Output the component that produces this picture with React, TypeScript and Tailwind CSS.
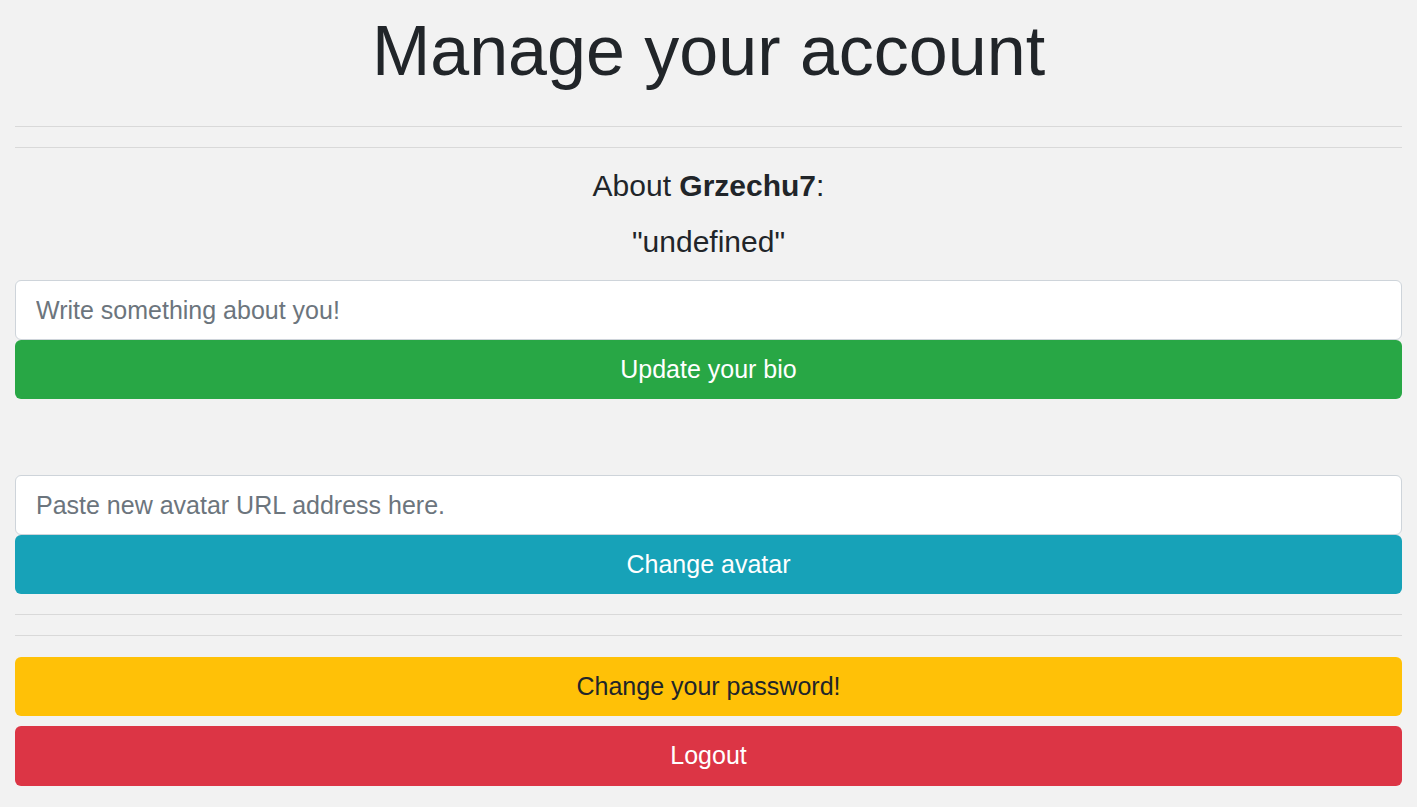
import { useState } from "react";

const App = () => {
  const [bio, setBio] = useState("");
  const [avatar, setAvatar] = useState("");

  return (
    <div
      className="min-h-screen bg-[#f2f2f2] px-[15px] text-[#212529]"
      style={{ fontFamily: '"Liberation Sans", Arial, sans-serif' }}
    >
      <h1 className="pt-[9px] text-center text-[70px] leading-[84px] font-light">
        Manage your account
      </h1>
      <hr className="mt-[33px] border-t border-[#d9d9d9]" />
      <hr className="mt-[20px] border-t border-[#d9d9d9]" />

      <h4 className="mt-[20px] text-center text-[30px] leading-[36px]">
        About <b>Grzechu7</b>:
      </h4>
      <h4 className="mt-[20px] text-center text-[30px] leading-[36px]">
        "undefined"
      </h4>

      <div className="mt-[20px] flex flex-col">
        <input
          type="text"
          value={bio}
          onChange={(e) => setBio(e.target.value)}
          placeholder="Write something about you!"
          className="h-[60px] w-full rounded-[6px] border border-[#ced4da] bg-white px-[20px] text-[25px] outline-none placeholder:text-[#6c757d]"
        />
        <button className="h-[59px] w-full rounded-[6px] bg-[#28a745] text-[25px] text-white">
          Update your bio
        </button>
      </div>

      <div className="mt-[76px] flex flex-col">
        <input
          type="text"
          value={avatar}
          onChange={(e) => setAvatar(e.target.value)}
          placeholder="Paste new avatar URL address here."
          className="h-[60px] w-full rounded-[6px] border border-[#ced4da] bg-white px-[20px] text-[25px] outline-none placeholder:text-[#6c757d]"
        />
        <button className="h-[59px] w-full rounded-[6px] bg-[#17a2b8] text-[25px] text-white">
          Change avatar
        </button>
      </div>

      <hr className="mt-[20px] border-t border-[#d9d9d9]" />
      <hr className="mt-[20px] border-t border-[#d9d9d9]" />

      <div className="mt-[21px] flex flex-col gap-[10px] pb-[21px]">
        <button className="h-[59px] w-full rounded-[6px] bg-[#ffc107] text-[25px] text-[#212529]">
          Change your password!
        </button>
        <button className="h-[60px] w-full rounded-[6px] bg-[#dc3545] text-[25px] text-white">
          Logout
        </button>
      </div>
    </div>
  );
};

export default App;
